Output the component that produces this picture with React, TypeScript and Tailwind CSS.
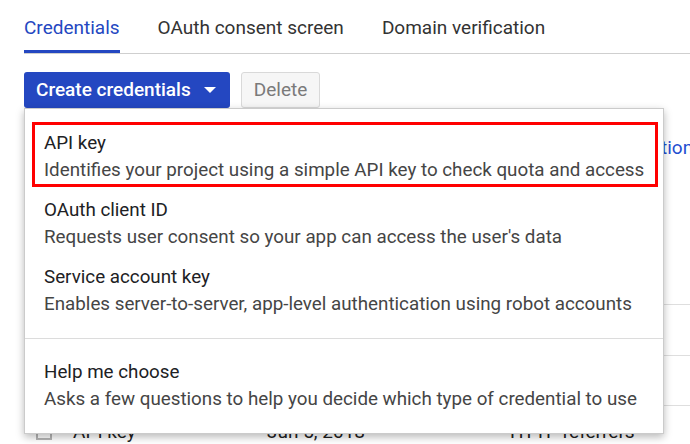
import React from "react";

const tabs = ["Credentials", "OAuth consent screen", "Domain verification"];

const menuItems = [
  {
    title: "API key",
    desc: "Identifies your project using a simple API key to check quota and access",
  },
  {
    title: "OAuth client ID",
    desc: "Requests user consent so your app can access the user's data",
  },
  {
    title: "Service account key",
    desc: "Enables server-to-server, app-level authentication using robot accounts",
  },
];

function Caret() {
  return (
    <svg width="12" height="6" viewBox="0 0 12 6" className="shrink-0">
      <path d="M0 0h12L6 6z" fill="white" />
    </svg>
  );
}

function CreateMenu() {
  return (
    <div className="absolute left-0 top-[36px] z-10 w-[640px] whitespace-nowrap border border-[#cbcbcb] bg-white pt-[21px] pb-[20px] text-[18.8px] shadow-[0_3px_8px_rgba(0,0,0,0.28)]">
      {/* highlight drawn round the first entry */}
      <div className="pointer-events-none absolute left-[7px] top-[13px] h-[65px] w-[626px] border-[3px] border-[#ff0000]" />
      <div className="flex flex-col gap-[13px]">
        {menuItems.map((item) => (
          <div key={item.title} className="px-[19px] leading-[27px]">
            <div className="text-[#202124]">{item.title}</div>
            <div className="text-[#454545]">{item.desc}</div>
          </div>
        ))}
      </div>
      <div className="my-[20px] border-t border-[#dcdcdc]" />
      <div className="px-[19px] leading-[27px]">
        <div className="text-[#202124]">Help me choose</div>
        <div className="text-[#454545]">
          Asks a few questions to help you decide which type of credential to use
        </div>
      </div>
    </div>
  );
}

export default function App() {
  return (
    <div className="h-[444px] w-[690px] overflow-hidden bg-white font-['Roboto',sans-serif] text-[19px]">
      <div className="ml-6 flex gap-[38px] border-b border-[#cfcfcf]">
        {tabs.map((tab, i) => (
          <div
            key={tab}
            className={
              i === 0
                ? "border-b-[3px] border-[#2447c1] pt-4 pb-[10px] leading-6 text-[#2447c1]"
                : "border-b-[3px] border-transparent pt-4 pb-[10px] leading-6 text-[#333333]"
            }
          >
            {tab}
          </div>
        ))}
      </div>

      <div className="relative ml-6 mt-[18px] flex gap-[11px]">
        <button className="flex h-9 items-center gap-[13px] rounded-[3px] bg-[#2447c1] pl-3 pr-[14px] font-medium text-white">
          Create credentials
          <Caret />
        </button>
        <button className="h-9 rounded-[3px] border border-[#d9d9d9] bg-[#f6f6f6] px-3 text-[#7a7a7a]">
          Delete
        </button>
        <CreateMenu />
      </div>

      <div className="mt-[28px] h-6 whitespace-nowrap pl-[661px] leading-6 text-[#1f4fd1]">
        tion
      </div>

      {/* key table, mostly hidden under the open menu */}
      <div className="ml-6">
        <div className="h-[145px] border-b border-[#dedede]" />
        <div className="h-[50.5px] border-b border-[#dedede]" />
        <div className="h-[50.5px] border-b border-[#dedede]" />
        <div className="grid h-[50.5px] grid-cols-[49px_194px_243px_1fr] items-center border-b border-[#dedede] pt-[2px] text-[#212121]">
          <div className="pl-3">
            <div className="h-4 w-4 border-2 border-[#b5b5b5]" />
          </div>
          <div>API key</div>
          <div>Jun 5, 2018</div>
          <div>HTTP referrers</div>
        </div>
      </div>
    </div>
  );
}
